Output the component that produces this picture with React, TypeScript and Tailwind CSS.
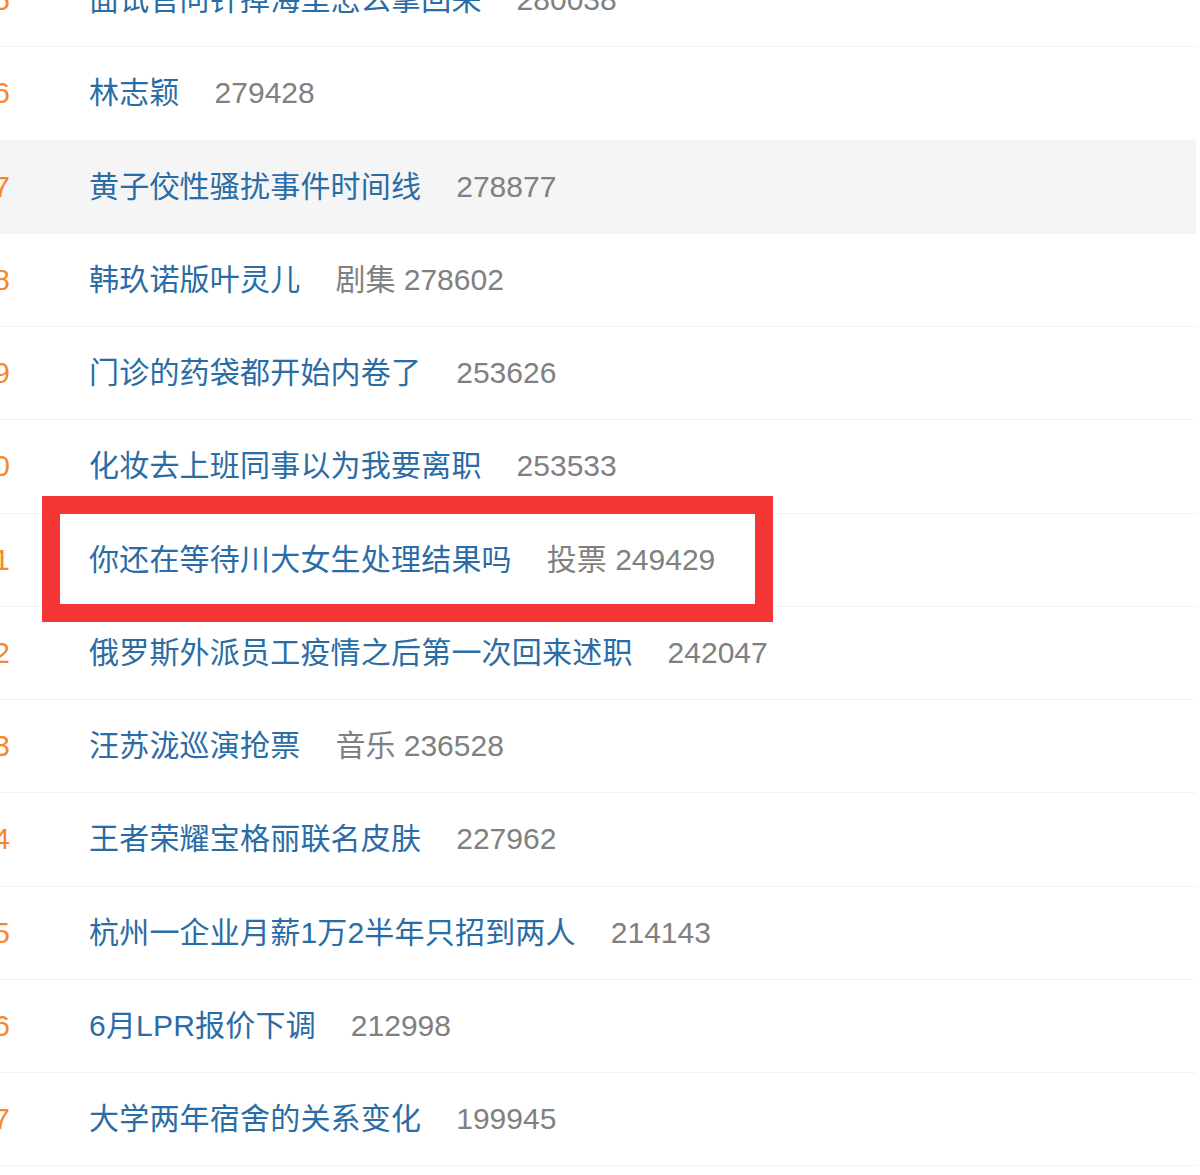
const rows: { rank: number; title: string; label?: string; num: string }[] = [
  { rank: 5, title: '面试官问针掉海里怎么拿回来', num: '280038' },
  { rank: 6, title: '林志颖', num: '279428' },
  { rank: 7, title: '黄子佼性骚扰事件时间线', num: '278877' },
  { rank: 8, title: '韩玖诺版叶灵儿', label: '剧集', num: '278602' },
  { rank: 9, title: '门诊的药袋都开始内卷了', num: '253626' },
  { rank: 10, title: '化妆去上班同事以为我要离职', num: '253533' },
  { rank: 11, title: '你还在等待川大女生处理结果吗', label: '投票', num: '249429' },
  { rank: 12, title: '俄罗斯外派员工疫情之后第一次回来述职', num: '242047' },
  { rank: 13, title: '汪苏泷巡演抢票', label: '音乐', num: '236528' },
  { rank: 14, title: '王者荣耀宝格丽联名皮肤', num: '227962' },
  { rank: 15, title: '杭州一企业月薪1万2半年只招到两人', num: '214143' },
  { rank: 16, title: '6月LPR报价下调', num: '212998' },
  { rank: 17, title: '大学两年宿舍的关系变化', num: '199945' },
];

export default function App() {
  return (
    <div
      className="w-[1200px] h-[1175px] overflow-hidden bg-white"
      style={{ fontFamily: '"Liberation Sans", "Noto Sans CJK SC", sans-serif' }}
    >
      <div className="w-[1196px] -mt-[46px]">
        {rows.map((r) => (
          <div
            key={r.rank}
            className={`relative flex items-center h-[93.25px] border-b border-[#f3f3f3] text-[30px] leading-none ${
              r.rank === 7 ? 'bg-[#f5f5f5]' : ''
            }`}
          >
            {/* rank, mostly cut off at the left edge */}
            <div className="w-[60px] -ml-[50px] text-right text-[#f7872a] whitespace-nowrap">{r.rank}</div>
            <a className="ml-[79px] text-[#2a6ca5] whitespace-nowrap tracking-[0.2px]">{r.title}</a>
            <span className="ml-[35px] text-[#808080] whitespace-nowrap">
              {r.label ? `${r.label} ` : ''}
              {r.num}
            </span>
            {r.rank === 11 && (
              <div className="absolute left-[42px] -top-[18px] w-[731px] h-[126px] border-[18px] border-[#f53637]" />
            )}
          </div>
        ))}
      </div>
    </div>
  );
}
